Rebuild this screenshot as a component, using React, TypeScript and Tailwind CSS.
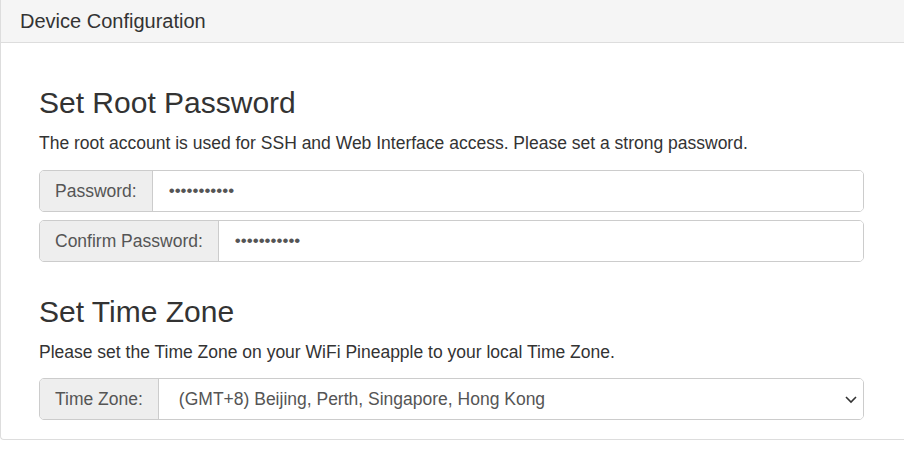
import React from "react";

function Group({ label, children }: { label: string; children: React.ReactNode }) {
  return (
    <div className="flex h-[42px] w-full rounded-[5px] border border-[#ccc]">
      <span className="flex items-center whitespace-nowrap rounded-l-[4px] border-r border-[#ccc] bg-[#eee] px-[15px] text-[17.5px] text-[#555]">
        {label}
      </span>
      {children}
    </div>
  );
}

export default function App() {
  return (
    <div className="min-h-[450px] w-[904px] bg-white" style={{ fontFamily: '"Liberation Sans", Arial, sans-serif' }}>
      <div className="w-[904px] rounded-bl-[4px] border-b border-l border-[#ddd]">
        <div className="flex h-[43px] items-center border-b border-[#ddd] bg-[#f5f5f5] px-[19px] text-[20px] text-[#333]">
          Device Configuration
        </div>
        <div className="flex flex-col pb-[19px] pl-[38px] pr-[40px] pt-[43px] text-[#333]">
          <h2 className="text-[30px] leading-[33px]">Set Root Password</h2>
          <p className="mt-[12px] text-[17.5px] leading-[25px]">
            The root account is used for SSH and Web Interface access. Please set a strong password.
          </p>
          <div className="mt-[14px] flex flex-col gap-[8px]">
            <Group label="Password:">
              <input
                type="password"
                readOnly
                defaultValue="aaaaaaaaaaa"
                className="min-w-0 flex-1 rounded-r-[4px] bg-white px-[16px] text-[17px] text-[#555] outline-none"
              />
            </Group>
            <Group label="Confirm Password:">
              <input
                type="password"
                readOnly
                defaultValue="aaaaaaaaaaa"
                className="min-w-0 flex-1 rounded-r-[4px] bg-white px-[16px] text-[17px] text-[#555] outline-none"
              />
            </Group>
          </div>
          <h2 className="mt-[33px] text-[30px] leading-[33px]">Set Time Zone</h2>
          <p className="mt-[12px] text-[17.5px] leading-[25px]">
            Please set the Time Zone on your WiFi Pineapple to your local Time Zone.
          </p>
          <div className="mt-[13px]">
            <Group label="Time Zone:">
              <div className="relative flex min-w-0 flex-1 items-center rounded-r-[4px] bg-white">
                <select
                  defaultValue="8"
                  className="h-full w-full appearance-none bg-transparent pl-[20px] pr-[40px] text-[17.5px] text-[#555] outline-none"
                >
                  <option value="8">(GMT+8) Beijing, Perth, Singapore, Hong Kong</option>
                </select>
                <svg
                  className="pointer-events-none absolute right-[5px] top-1/2 -translate-y-1/2"
                  width="14"
                  height="10"
                  viewBox="0 0 14 10"
                >
                  <path d="M2 3 L7 8 L12 3" fill="none" stroke="#333" strokeWidth="1.6" />
                </svg>
              </div>
            </Group>
          </div>
        </div>
      </div>
    </div>
  );
}
